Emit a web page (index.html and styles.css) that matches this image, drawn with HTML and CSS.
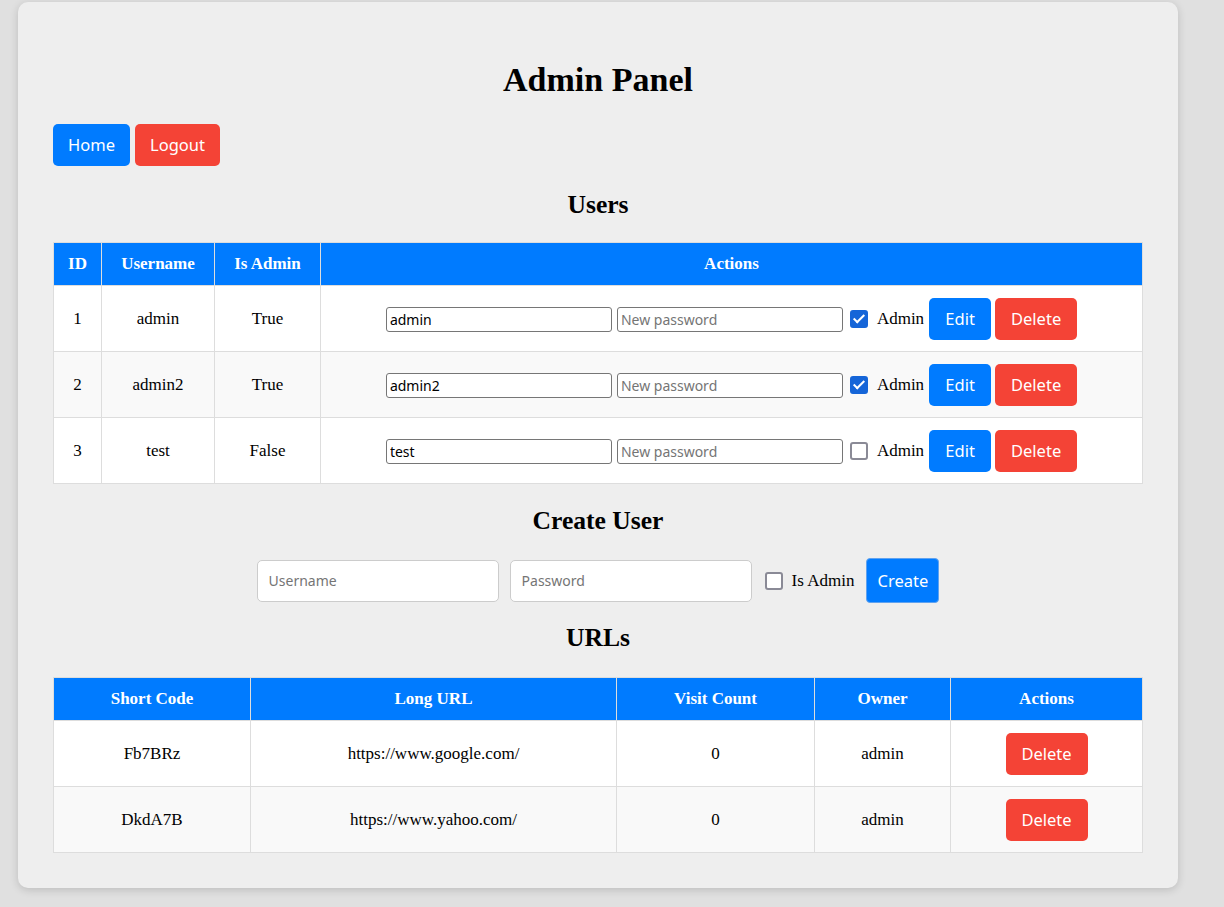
FILE: index.html
```html
<!DOCTYPE html>
<html lang="en">
<head>
<meta charset="utf-8">
<title>Admin Panel</title>
<link rel="stylesheet" href="styles.css">
</head>
<body>
<div class="panel">
  <h1 class="title">Admin Panel</h1>
  <nav class="nav">
    <button class="btn btn-blue btn-home">Home</button>
    <button class="btn btn-red btn-logout">Logout</button>
  </nav>

  <h2 class="section section-users">Users</h2>
  <table class="grid">
    <colgroup>
      <col class="c-id"><col class="c-user"><col class="c-admin"><col class="c-actions">
    </colgroup>
    <thead>
      <tr><th>ID</th><th>Username</th><th>Is Admin</th><th>Actions</th></tr>
    </thead>
    <tbody>
      <tr>
        <td>1</td><td>admin</td><td>True</td>
        <td>
          <div class="row-actions">
            <input class="field" type="text" value="admin">
            <input class="field field-pw" type="password" placeholder="New password">
            <input class="check" type="checkbox" checked>
            <span class="check-label">Admin</span>
            <button class="btn btn-blue btn-edit">Edit</button>
            <button class="btn btn-red btn-delete">Delete</button>
          </div>
        </td>
      </tr>
      <tr>
        <td>2</td><td>admin2</td><td>True</td>
        <td>
          <div class="row-actions">
            <input class="field" type="text" value="admin2">
            <input class="field field-pw" type="password" placeholder="New password">
            <input class="check" type="checkbox" checked>
            <span class="check-label">Admin</span>
            <button class="btn btn-blue btn-edit">Edit</button>
            <button class="btn btn-red btn-delete">Delete</button>
          </div>
        </td>
      </tr>
      <tr>
        <td>3</td><td>test</td><td>False</td>
        <td>
          <div class="row-actions">
            <input class="field" type="text" value="test">
            <input class="field field-pw" type="password" placeholder="New password">
            <input class="check" type="checkbox">
            <span class="check-label">Admin</span>
            <button class="btn btn-blue btn-edit">Edit</button>
            <button class="btn btn-red btn-delete">Delete</button>
          </div>
        </td>
      </tr>
    </tbody>
  </table>

  <h2 class="section section-create">Create User</h2>
  <form class="create-form">
    <input class="create-field" type="text" placeholder="Username">
    <input class="create-field create-pw" type="password" placeholder="Password">
    <input class="check create-check" type="checkbox">
    <span class="check-label">Is Admin</span>
    <button type="button" class="btn btn-blue btn-create">Create</button>
  </form>

  <h2 class="section section-urls">URLs</h2>
  <table class="grid">
    <colgroup>
      <col class="c-code"><col class="c-long"><col class="c-visits"><col class="c-owner"><col class="c-uactions">
    </colgroup>
    <thead>
      <tr><th>Short Code</th><th>Long URL</th><th>Visit Count</th><th>Owner</th><th>Actions</th></tr>
    </thead>
    <tbody>
      <tr>
        <td>Fb7BRz</td><td>https://www.google.com/</td><td>0</td><td>admin</td>
        <td><div class="cell-actions"><button class="btn btn-red btn-delete">Delete</button></div></td>
      </tr>
      <tr>
        <td>DkdA7B</td><td>https://www.yahoo.com/</td><td>0</td><td>admin</td>
        <td><div class="cell-actions"><button class="btn btn-red btn-delete">Delete</button></div></td>
      </tr>
    </tbody>
  </table>
</div>
</body>
</html>
```

FILE: styles.css
```css
html, body {
  margin: 0;
}

body {
  background: #e0e0e0;
  padding: 2px 18px 19px;
  font-family: "Liberation Serif", "Times New Roman", serif;
  font-size: 17px;
  color: #000;
}

.panel {
  width: 1160px;
  box-sizing: border-box;
  padding: 35px;
  background: #eeeeee;
  border-radius: 10px;
  box-shadow: 0 2px 8px rgba(0, 0, 0, 0.16);
}

.title {
  margin: 23px 0 24px;
  text-align: center;
  font-size: 34px;
  line-height: 40px;
  font-weight: bold;
}

.nav {
  display: flex;
  gap: 5px;
  height: 42px;
}

.btn {
  box-sizing: border-box;
  height: 42px;
  padding: 0;
  border: none;
  border-radius: 5px;
  color: #fff;
  font-family: "Noto Sans", "Open Sans", sans-serif;
  font-size: 16.5px;
  line-height: 20px;
  text-align: center;
  cursor: pointer;
}

.btn-blue { background: #007bff; }
.btn-red { background: #f44336; }

.btn-home { width: 77px; }
.btn-logout { width: 85px; }
.btn-edit { width: 62px; }
.btn-delete { width: 82px; }

.section {
  margin: 24px 0 22px;
  text-align: center;
  font-size: 25.6px;
  line-height: 30px;
  font-weight: bold;
}

.section-create {
  margin: 22px 0 22px;
}

.section-urls {
  margin: 20px 0 24px;
}

.grid {
  width: 1090px;
  border-collapse: collapse;
  table-layout: fixed;
  border: 1px solid #dddddd;
}

.grid th,
.grid td {
  border: 1px solid #dddddd;
  text-align: center;
  line-height: 20px;
}

.grid th {
  background: #007bff;
  color: #fff;
  font-weight: bold;
  padding: 11px 12px;
}

.grid td {
  padding: 12px 12px 11px;
  vertical-align: middle;
}

.grid tbody tr:nth-child(even) td {
  background: #f9f9f9;
}

.grid tbody tr:nth-child(odd) td {
  background: #ffffff;
}

.c-id { width: 48px; }
.c-user { width: 113px; }
.c-admin { width: 106px; }
.c-actions { width: auto; }

.c-code { width: 197px; }
.c-long { width: 366px; }
.c-visits { width: 198px; }
.c-owner { width: 136px; }
.c-uactions { width: auto; }

.row-actions,
.cell-actions {
  display: flex;
  align-items: center;
  justify-content: center;
  height: 42px;
}

.field {
  box-sizing: border-box;
  width: 226px;
  height: 25px;
  margin: 0 5px 0 0;
  padding: 1px 3px;
  border: 1px solid #767676;
  border-radius: 3px;
  background: #fff;
  font-family: "Noto Sans", "Open Sans", sans-serif;
  font-size: 14px;
  color: #000;
}

.field-pw {
  margin-right: 7px;
}

.field::placeholder,
.create-field::placeholder {
  color: #757575;
}

.check {
  appearance: none;
  -webkit-appearance: none;
  box-sizing: border-box;
  position: relative;
  width: 18px;
  height: 18px;
  margin: 0 9px 0 0;
  border: 2px solid #8a8a96;
  border-radius: 3px;
  background: #fff;
}

.check:checked {
  border-color: #1565d8;
  background: #1565d8;
}

.check:checked::after {
  content: "";
  position: absolute;
  left: 4px;
  top: 0px;
  width: 4px;
  height: 9px;
  border: solid #fff;
  border-width: 0 2.5px 2.5px 0;
  transform: rotate(45deg);
}

.check-label {
  font-size: 17px;
  margin-right: 5px;
}

.btn-edit {
  margin-right: 4px;
}

.create-form {
  display: flex;
  align-items: center;
  justify-content: center;
  height: 45px;
  margin: 0;
}

.create-field {
  box-sizing: border-box;
  width: 242px;
  height: 42px;
  margin: 0 11px 0 0;
  padding: 0 11px;
  border: 1px solid #cccccc;
  border-radius: 5px;
  background: #fff;
  font-family: "Noto Sans", "Open Sans", sans-serif;
  font-size: 14px;
}

.create-pw {
  margin-right: 13px;
}

.create-check {
  margin-right: 9px;
}

.create-form .check-label {
  margin-right: 12px;
}

.btn-create {
  width: 73px;
  height: 45px;
  border: 1px solid #5fa2f0;
  border-radius: 4px;
}
```
